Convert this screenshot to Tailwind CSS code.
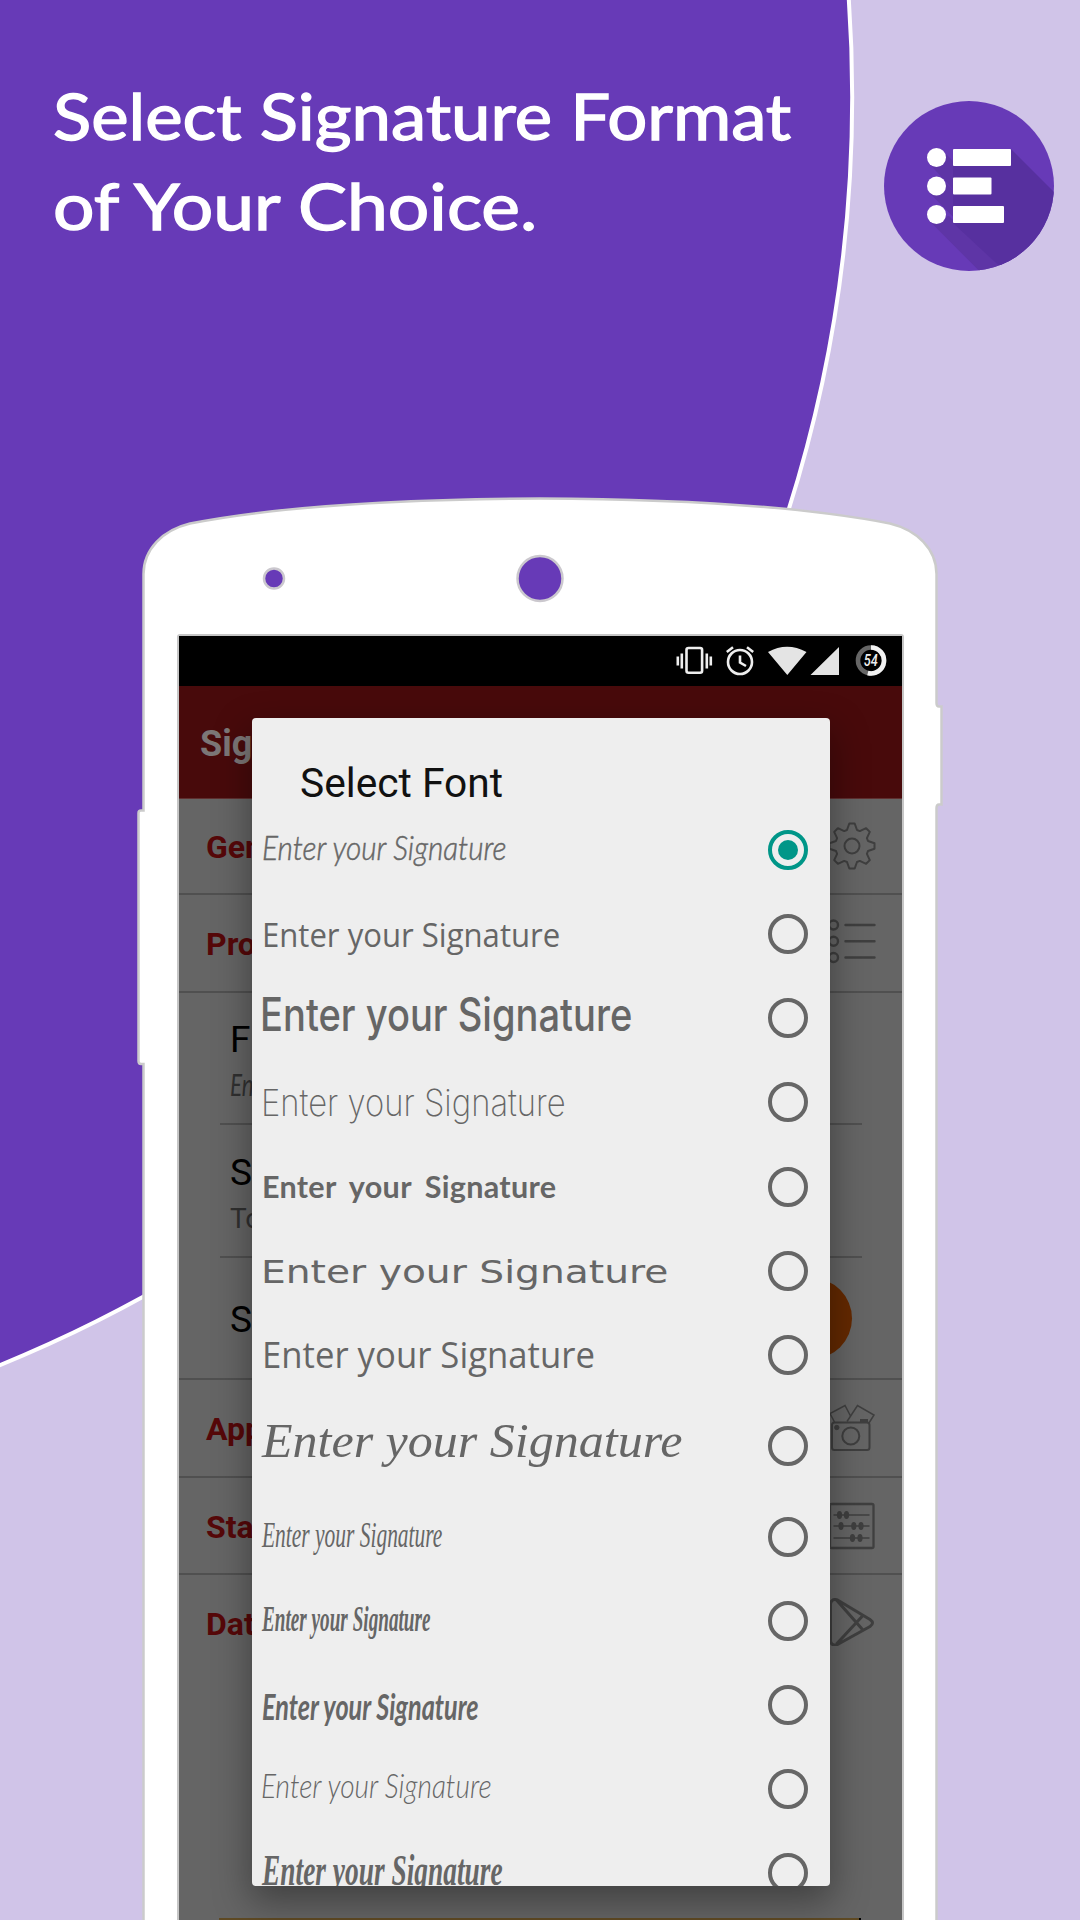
<!DOCTYPE html>
<html lang="en">
<head>
<meta charset="utf-8">
<title>Select Signature Format</title>
<script src="https://cdn.jsdelivr.net/npm/@tailwindcss/browser@4"></script>
</head>
<body class="font-['Roboto',sans-serif]">
<main class="relative h-[1920px] w-[1080px] overflow-hidden bg-[#d0c4e8]">

  <!-- backdrop circle and phone outline -->
  <svg class="absolute inset-0" width="1080" height="1920" viewBox="0 0 1080 1920" fill="none">
    <circle cx="-517.3" cy="97" r="1369.5" fill="#673ab7" stroke="#fff" stroke-width="4"/>
    <path d="M143.5 1930V1064H141Q138.500 1064 138.500 1061V813Q138.500 810.500 141 810.500H143.500V574C143.500 549 163 530 190 523.500C290 504 420 499 540 498.500C660 499 790 504 890 523.500C917 530 936.500 549 936.500 574V703Q936.500 706.500 939 706.500H941.500V804.500H939Q936.500 804.500 936.500 808V1930Z" fill="#fff" stroke="#cbcbcb" stroke-width="2.500"/>
    <circle cx="274" cy="578.500" r="10" fill="#673ab7" stroke="#cbc8ce" stroke-width="2.500"/>
    <circle cx="540" cy="578.500" r="22.500" fill="#673ab7" stroke="#cbc8ce" stroke-width="2.500"/>
  </svg>

  <header class="relative flex h-[634px] justify-between">
    <h1 class="mt-[71px] ml-[53px] text-[64px] leading-[89.5px] whitespace-nowrap text-white font-['Lato',sans-serif] [-webkit-text-stroke:1.3px_white]">
      <span class="block w-fit origin-left scale-x-[1.105]">Select Signature Format</span>
      <span class="block w-fit origin-left scale-x-[1.145]">of Your Choice.</span>
    </h1>
    <svg class="mt-[101px] mr-[26px] shrink-0" width="170" height="170" viewBox="0 0 170 170">
      <defs><clipPath id="disc"><circle cx="85" cy="85" r="85"/></clipPath></defs>
      <circle cx="85" cy="85" r="85" fill="#673ab7"/>
      <g clip-path="url(#disc)">
        <path d="M45.500 63L59 50L200 191V230ZM45.500 92L59 79L200 220V247ZM45.500 120L65 115L200 250V275Z" fill="#5e35a6"/>
        <path d="M127 48L260 181V300L69 122V65L127 65Z" fill="#57309f"/>
      </g>
      <g fill="#fff">
        <circle cx="52.500" cy="56.500" r="9.500"/><circle cx="52.500" cy="85" r="9.500"/><circle cx="52.500" cy="113.500" r="9.500"/>
        <rect x="69" y="48" width="58" height="17" rx="1"/><rect x="69" y="76.500" width="38.500" height="17" rx="1"/><rect x="69" y="105" width="51" height="17" rx="1"/>
      </g>
    </svg>
  </header>

  <!-- phone screen -->
  <section class="relative ml-[177px] h-[1300px] w-[727px] rounded-t-[3px] border-2 border-[#c6c6c6] bg-[#656565]">
    <div class="flex h-[50px] items-center justify-end bg-black pr-[15px]">
      <svg width="212" height="34" viewBox="0 0 212 34" fill="none">
        <g stroke="#eee" stroke-width="2.600">
          <rect x="11.500" y="4" width="15.600" height="24.700" rx="2"/>
          <path d="M2.800 12.500V21.500M6.800 9.500V24.500M31.800 9.500V24.500M35.800 12.500V21.500"/>
          <circle cx="65" cy="18" r="12"/><path d="M65 11.500V18.500L71 22M51.800 8L58 3.300M78.200 8L72 3.300"/>
        </g>
        <path d="M93 8Q112 -2.500 131.500 8L112.300 31ZM164 3V31H135.500Z" fill="#e4e4e4"/>
        <circle cx="196" cy="16.500" r="13" stroke="#666" stroke-width="4.600"/>
        <path d="M196 3.500A13 13 0 1 1 192.800 29.100" stroke="#f2f2f2" stroke-width="4.600"/>
        <text x="195.800" y="22" text-anchor="middle" textLength="14" lengthAdjust="spacingAndGlyphs" class="font-['Roboto'] text-[16px] font-medium italic" fill="#eee">54</text>
      </svg>
    </div>
    <div class="flex h-[113px] items-center border-b border-[#5f3030] bg-[#480a0b] pl-[21px] text-[36px] font-bold text-[#7c7777]"><span class="translate-y-[2px]">Sig</span></div>

    <div class="flex h-[96px] items-center justify-between border-b-2 border-[#505050] pr-[26px] pl-[27px] text-[32px] font-bold text-[#560809]">
      <span class="translate-y-px">Gen</span>
      <svg width="48" height="48" viewBox="-24 -24 48 48" fill="none" stroke="#3f3f3f" stroke-width="2" stroke-linejoin="round"><path d="M-5 -16L-2.700 -22.500H2.700L5 -16L7.800 -14.900L14.100 -17.800L17.800 -14.100L14.900 -7.800L16 -5L22.500 -2.700V2.700L16 5L14.900 7.800L17.800 14.100L14.100 17.800L7.800 14.900L5 16L2.700 22.500H-2.700L-5 16L-7.800 14.900L-14.100 17.800L-17.800 14.100L-14.900 7.800L-16 5L-22.500 2.700V-2.700L-16 -5L-14.900 -7.800L-17.800 -14.100L-14.100 -17.800L-7.800 -14.900Z"/><circle r="7.500"/></svg>
    </div>
    <div class="flex h-[98px] items-center justify-between border-b-2 border-[#505050] pr-[26px] pl-[27px] text-[32px] font-bold text-[#560809]">
      <span class="translate-y-px">Pro</span>
      <svg width="48" height="48" viewBox="0 0 48 48" fill="none" stroke="#3f3f3f" stroke-width="2.400" stroke-linecap="round"><circle cx="5.500" cy="6" r="4.500"/><circle cx="5.500" cy="22.200" r="4.500"/><circle cx="5.500" cy="38.500" r="4.500"/><path d="M17.500 6H46.500M17.500 22.200H46.500M17.500 38.500H46.500"/></svg>
    </div>
    <div class="mr-[40px] ml-[41px] flex h-[132px] flex-col border-b-2 border-[#505050] pt-[25px] pl-[10px] text-black">
      <span class="text-[37px] leading-[44px]">F</span>
      <span class="mt-[1px] w-fit origin-left scale-x-75 text-[30px] leading-[42px] text-[#303030] font-['Lato',sans-serif] italic">En</span>
    </div>
    <div class="mr-[40px] ml-[41px] flex h-[133px] flex-col border-b-2 border-[#505050] pt-[26px] pl-[10px] text-black">
      <span class="text-[37px] leading-[44px]">S</span>
      <span class="mt-[6px] text-[28px] leading-[36px] text-[#303030]">To</span>
    </div>
    <div class="flex h-[122px] items-center justify-between border-b-2 border-[#505050] pr-[50px] pl-[51px] text-[37px] text-black">
      <span class="translate-y-[2px]">S</span><span class="size-[81px] rounded-full bg-[#642900]"></span>
    </div>
    <div class="flex h-[98px] items-center justify-between border-b-2 border-[#505050] pr-[26px] pl-[27px] text-[32px] font-bold text-[#560809]">
      <span class="translate-y-px">App</span>
      <svg width="48" height="48" viewBox="0 0 48 48" fill="none" stroke="#3f3f3f" stroke-width="2"><rect x="4" y="18.500" width="37.500" height="27.500" rx="2.500"/><circle cx="22.800" cy="32" r="8.500"/><circle cx="8.800" cy="23.500" r="2.200" fill="#3f3f3f" stroke-width="1"/><path d="M32 17H40" stroke-width="4"/><path d="M6.500 18L2 9.500L17 1.500L22.500 12M19 17.500L29.500 1.500L46 11L41 19" stroke-width="1.500"/></svg>
    </div>
    <div class="flex h-[97px] items-center justify-between border-b-2 border-[#505050] pr-[26px] pl-[27px] text-[32px] font-bold text-[#560809]">
      <span class="translate-y-px">Sta</span>
      <svg width="48" height="48" viewBox="0 0 48 48" fill="none" stroke="#3f3f3f" stroke-width="2.300"><rect x="2" y="2" width="43.500" height="44" rx="1.500"/><path d="M5.500 13H41.500M5.500 24H41.500M5.500 36H41.500" stroke-width="1.600"/><g fill="#3f3f3f" stroke="none"><ellipse cx="11.500" cy="13" rx="2.600" ry="4"/><ellipse cx="18.500" cy="13" rx="2.600" ry="4"/><ellipse cx="13" cy="24" rx="2.600" ry="4"/><ellipse cx="25.800" cy="24" rx="2.600" ry="4"/><ellipse cx="33" cy="24" rx="2.600" ry="4"/><ellipse cx="24.500" cy="36" rx="2.600" ry="4"/><ellipse cx="32" cy="36" rx="2.600" ry="4"/></g></svg>
    </div>
    <div class="flex h-[97px] items-center justify-between pr-[26px] pl-[27px] text-[32px] font-bold text-[#560809]">
      <span>Dat</span>
      <svg class="-translate-y-[2px]" width="48" height="48" viewBox="0 0 48 48" fill="none" stroke="#3f3f3f" stroke-width="3" stroke-linejoin="round"><path d="M2.500 5.500Q4 0 9.500 2L42 21.500Q47 25 42 28.500L9.500 46.500Q4 48.500 2.500 43.500ZM8.500 2L34.500 31.500M8.500 46L34.500 18"/></svg>
    </div>
    <div class="mt-[246px] ml-[40px] h-2 w-[642px] border-r-2 border-black bg-[#5f4a24]"></div>
  </section>

  <!-- font picker dialog -->
  <section class="absolute top-[718px] left-[252px] h-[1168px] w-[578px] overflow-hidden rounded-[4px] bg-[#eee] text-[#666] shadow-[0_14px_36px_2px_rgba(0,0,0,0.36)]">
    <h2 class="flex h-[90px] items-center pl-[48px] text-[40px] text-[#111]"><span class="w-fit origin-left translate-y-[21px] scale-x-[1.018]">Select Font</span></h2>
    <ul class="whitespace-nowrap">
      <li class="flex h-[84px] items-center justify-between pr-[22px] pl-[10px]"><span class="w-[300px] origin-left -translate-y-[4px] scale-x-[.875] text-[34px] font-light italic font-['Lato',sans-serif] [-webkit-text-stroke:0.5px_#666]">Enter your Signature</span><i class="flex size-[40px] items-center justify-center rounded-full border-4 border-[#009688]"><b class="size-5 rounded-full bg-[#009688]"></b></i></li>
      <li class="flex h-[84px] items-center justify-between pr-[22px] pl-[10px]"><span class="w-[300px] origin-left translate-y-px scale-x-[.942] text-[33px] font-['Open_Sans',sans-serif]">Enter your Signature</span><i class="size-[40px] rounded-full border-4 border-[#666]"></i></li>
      <li class="flex h-[84px] items-center justify-between pr-[22px] pl-[8px]"><span class="w-[300px] origin-left -translate-y-[4px] scale-x-[.828] text-[46px] font-medium font-['Inter',sans-serif]">Enter your Signature</span><i class="size-[40px] rounded-full border-4 border-[#666]"></i></li>
      <li class="flex h-[84px] items-center justify-between pr-[22px] pl-[9px]"><span class="w-[300px] origin-left translate-y-px scale-x-[.887] text-[37px] font-extralight font-['Inter',sans-serif]">Enter your Signature</span><i class="size-[40px] rounded-full border-4 border-[#666]"></i></li>
      <li class="flex h-[85px] items-center justify-between pr-[22px] pl-[10px]"><span class="w-[300px] origin-left scale-x-[.985] text-[31px] font-bold tracking-[.3px] [word-spacing:6px] font-['Lato',sans-serif]">Enter your Signature</span><i class="size-[40px] rounded-full border-4 border-[#666]"></i></li>
      <li class="flex h-[84px] items-center justify-between pr-[22px] pl-[9px]"><span class="w-[300px] origin-left translate-y-px scale-x-[1.225] text-[32px] font-['DejaVu_Sans',sans-serif]">Enter your Signature</span><i class="size-[40px] rounded-full border-4 border-[#666]"></i></li>
      <li class="flex h-[84px] items-center justify-between pr-[22px] pl-[10px]"><span class="w-[300px] origin-left scale-x-[.964] text-[36px] font-['Open_Sans',sans-serif]">Enter your Signature</span><i class="size-[40px] rounded-full border-4 border-[#666]"></i></li>
      <li class="flex h-[98px] items-center justify-between pr-[22px] pl-[10px]"><span class="w-[300px] origin-left -translate-y-[5px] scale-x-[1.042] text-[48px] italic font-['Liberation_Serif',serif]">Enter your Signature</span><i class="size-[40px] rounded-full border-4 border-[#666]"></i></li>
      <li class="flex h-[84px] items-center justify-between pr-[22px] pl-[10px]"><span class="w-[300px] origin-left -translate-y-[2px] scale-x-[.596] text-[36px] italic font-['Liberation_Serif',serif]">Enter your Signature</span><i class="size-[40px] rounded-full border-4 border-[#666]"></i></li>
      <li class="flex h-[84px] items-center justify-between pr-[22px] pl-[10px]"><span class="w-[300px] origin-left -translate-y-[2px] scale-x-[.533] text-[36px] font-bold italic font-['Liberation_Serif',serif]">Enter your Signature</span><i class="size-[40px] rounded-full border-4 border-[#666]"></i></li>
      <li class="flex h-[84px] items-center justify-between pr-[22px] pl-[10px]"><span class="w-[300px] origin-left translate-y-px scale-x-[.701] text-[36px] font-bold italic font-['Lato',sans-serif]">Enter your Signature</span><i class="size-[40px] rounded-full border-4 border-[#666]"></i></li>
      <li class="flex h-[84px] items-center justify-between pr-[22px] pl-[9px]"><span class="w-[300px] origin-left -translate-y-[5px] scale-x-[.825] text-[34px] font-light italic font-['Lato',sans-serif]">Enter your Signature</span><i class="size-[40px] rounded-full border-4 border-[#666]"></i></li>
      <li class="flex h-[84px] items-center justify-between pr-[22px] pl-[10px]"><span class="w-[300px] origin-left -translate-y-[2px] scale-x-[.623] text-[44px] font-bold italic font-['Liberation_Serif',serif]">Enter your Signature</span><i class="size-[40px] rounded-full border-4 border-[#666]"></i></li>
    </ul>
  </section>
</main>
</body>
</html>
